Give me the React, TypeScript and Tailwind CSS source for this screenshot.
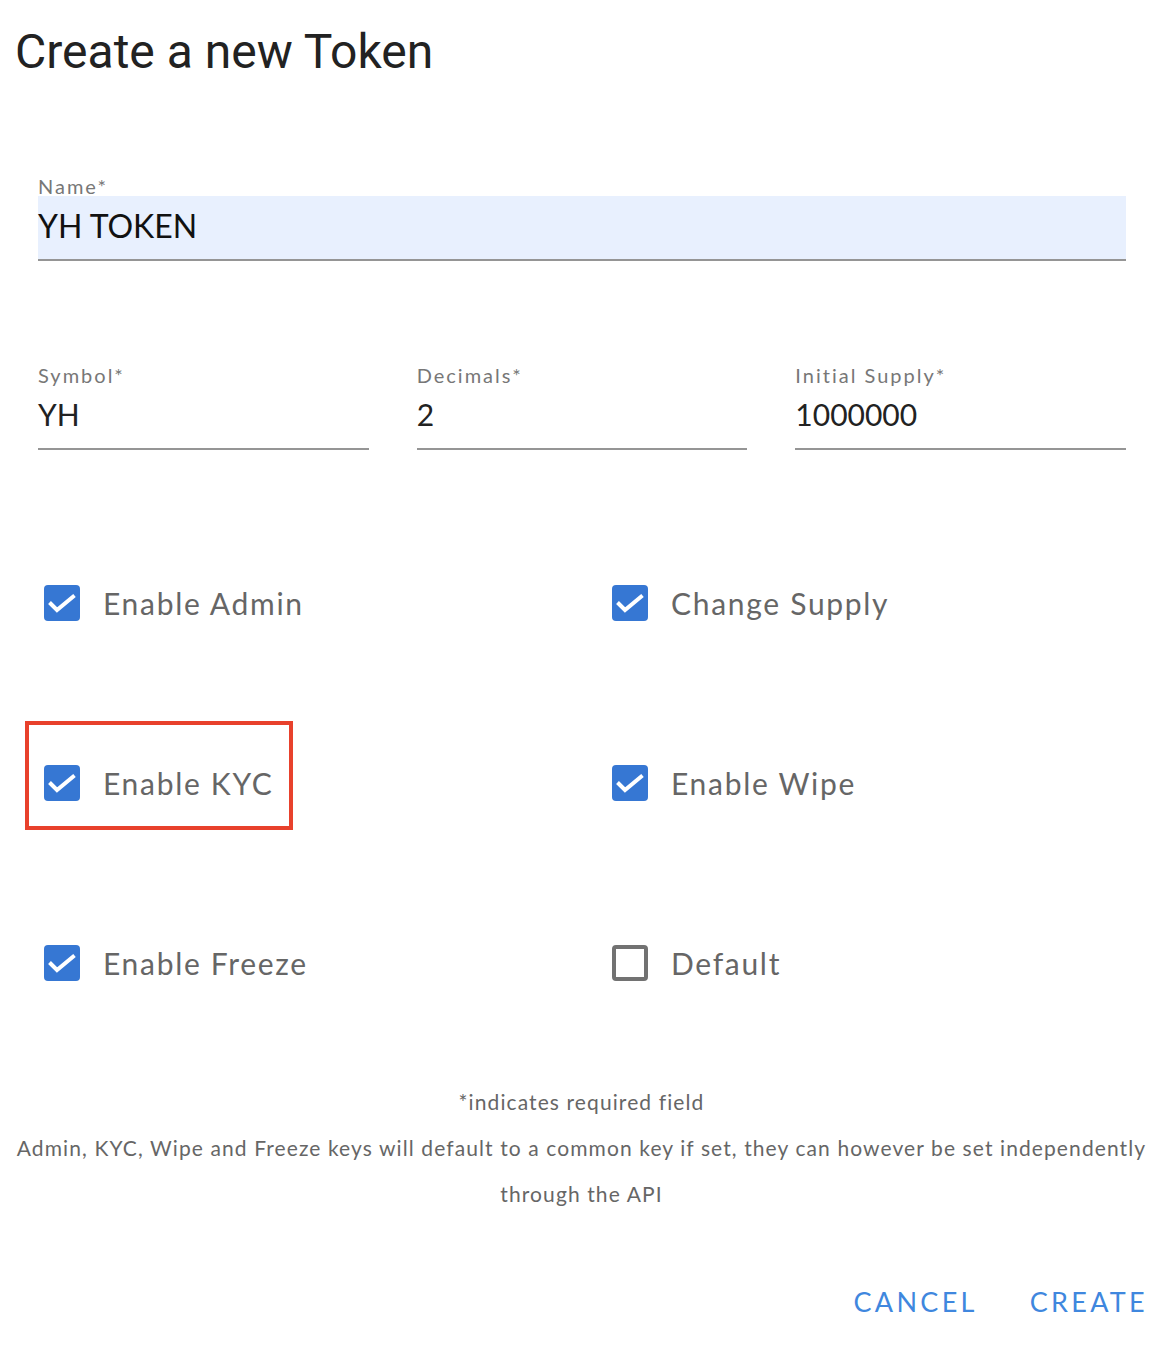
const body = { fontFamily: "Lato, 'Open Sans', sans-serif" };

function CheckBox({ checked }: { checked: boolean }) {
  if (!checked) {
    return <div className="w-[36px] h-[36px] shrink-0 rounded-[4px] border-[4px] border-[#727272]" />;
  }
  return (
    <div className="w-[36px] h-[36px] shrink-0 rounded-[4px] bg-[#3677d3] flex items-center justify-center">
      <svg width="36" height="36" viewBox="0 0 36 36">
        <polyline points="5.5,17.5 13,25 30.5,10.5" fill="none" stroke="white" strokeWidth="4" />
      </svg>
    </div>
  );
}

function Option({ label, checked, marked }: { label: string; checked: boolean; marked?: boolean }) {
  return (
    <div className="relative h-[180px] flex items-center">
      {marked && (
        <div className="absolute left-[-19px] top-[28px] w-[268px] h-[109px] border-[4px] border-[#e8412c]" />
      )}
      <CheckBox checked={checked} />
      <span className="ml-[23px] text-[30px] text-[#666666] tracking-[1.7px]">{label}</span>
    </div>
  );
}

function Field({ label, value }: { label: string; value: string }) {
  return (
    <div>
      <div className="h-[20px] leading-[20px] text-[20px] tracking-[2px] text-[#777777]">{label}</div>
      <div className="h-[65px] pt-[9px] border-b-2 border-[#959595] text-[30px] leading-[40px] text-[#222222]">
        {value}
      </div>
    </div>
  );
}

export default function App() {
  return (
    <div className="w-[1176px] min-h-[1346px] bg-white" style={body}>
      <div
        className="h-[104px] flex items-center pl-[15px] text-[48px] text-[#222222]"
        style={{ fontFamily: "Roboto, sans-serif" }}
      >
        Create a new Token
      </div>

      <div className="pl-[38px] pr-[50px]">
        <div className="mt-[73px]">
          <div className="h-[19px] leading-[19px] text-[20px] tracking-[2px] text-[#777777]">Name*</div>
          <div className="h-[65px] pt-[10px] bg-[#e8f0fe] border-b-2 border-[#959595] text-[32px] leading-[40px] text-[#111111]">
            YH TOKEN
          </div>
        </div>

        <div className="mt-[104px] grid grid-cols-3 gap-12">
          <Field label="Symbol*" value="YH" />
          <Field label="Decimals*" value="2" />
          <Field label="Initial Supply*" value="1000000" />
        </div>

        <div className="mt-[63px] ml-[6px] grid grid-cols-[568px_1fr]">
          <Option label="Enable Admin" checked />
          <Option label="Change Supply" checked />
          <Option label="Enable KYC" checked marked />
          <Option label="Enable Wipe" checked />
          <Option label="Enable Freeze" checked />
          <Option label="Default" checked={false} />
        </div>
      </div>

      <div className="mt-[26px] w-[1163px] text-center text-[21px] leading-[46px] tracking-[1.1px] text-[#666666]">
        <div>*indicates required field</div>
        <div>Admin, KYC, Wipe and Freeze keys will default to a common key if set, they can however be set independently</div>
        <div>through the API</div>
      </div>

      <div className="mt-[61px] flex justify-end gap-[52px] pr-[28px] text-[27px] leading-[48px] tracking-[3.3px] text-[#3f87de]">
        <button>CANCEL</button>
        <button>CREATE</button>
      </div>
    </div>
  );
}
